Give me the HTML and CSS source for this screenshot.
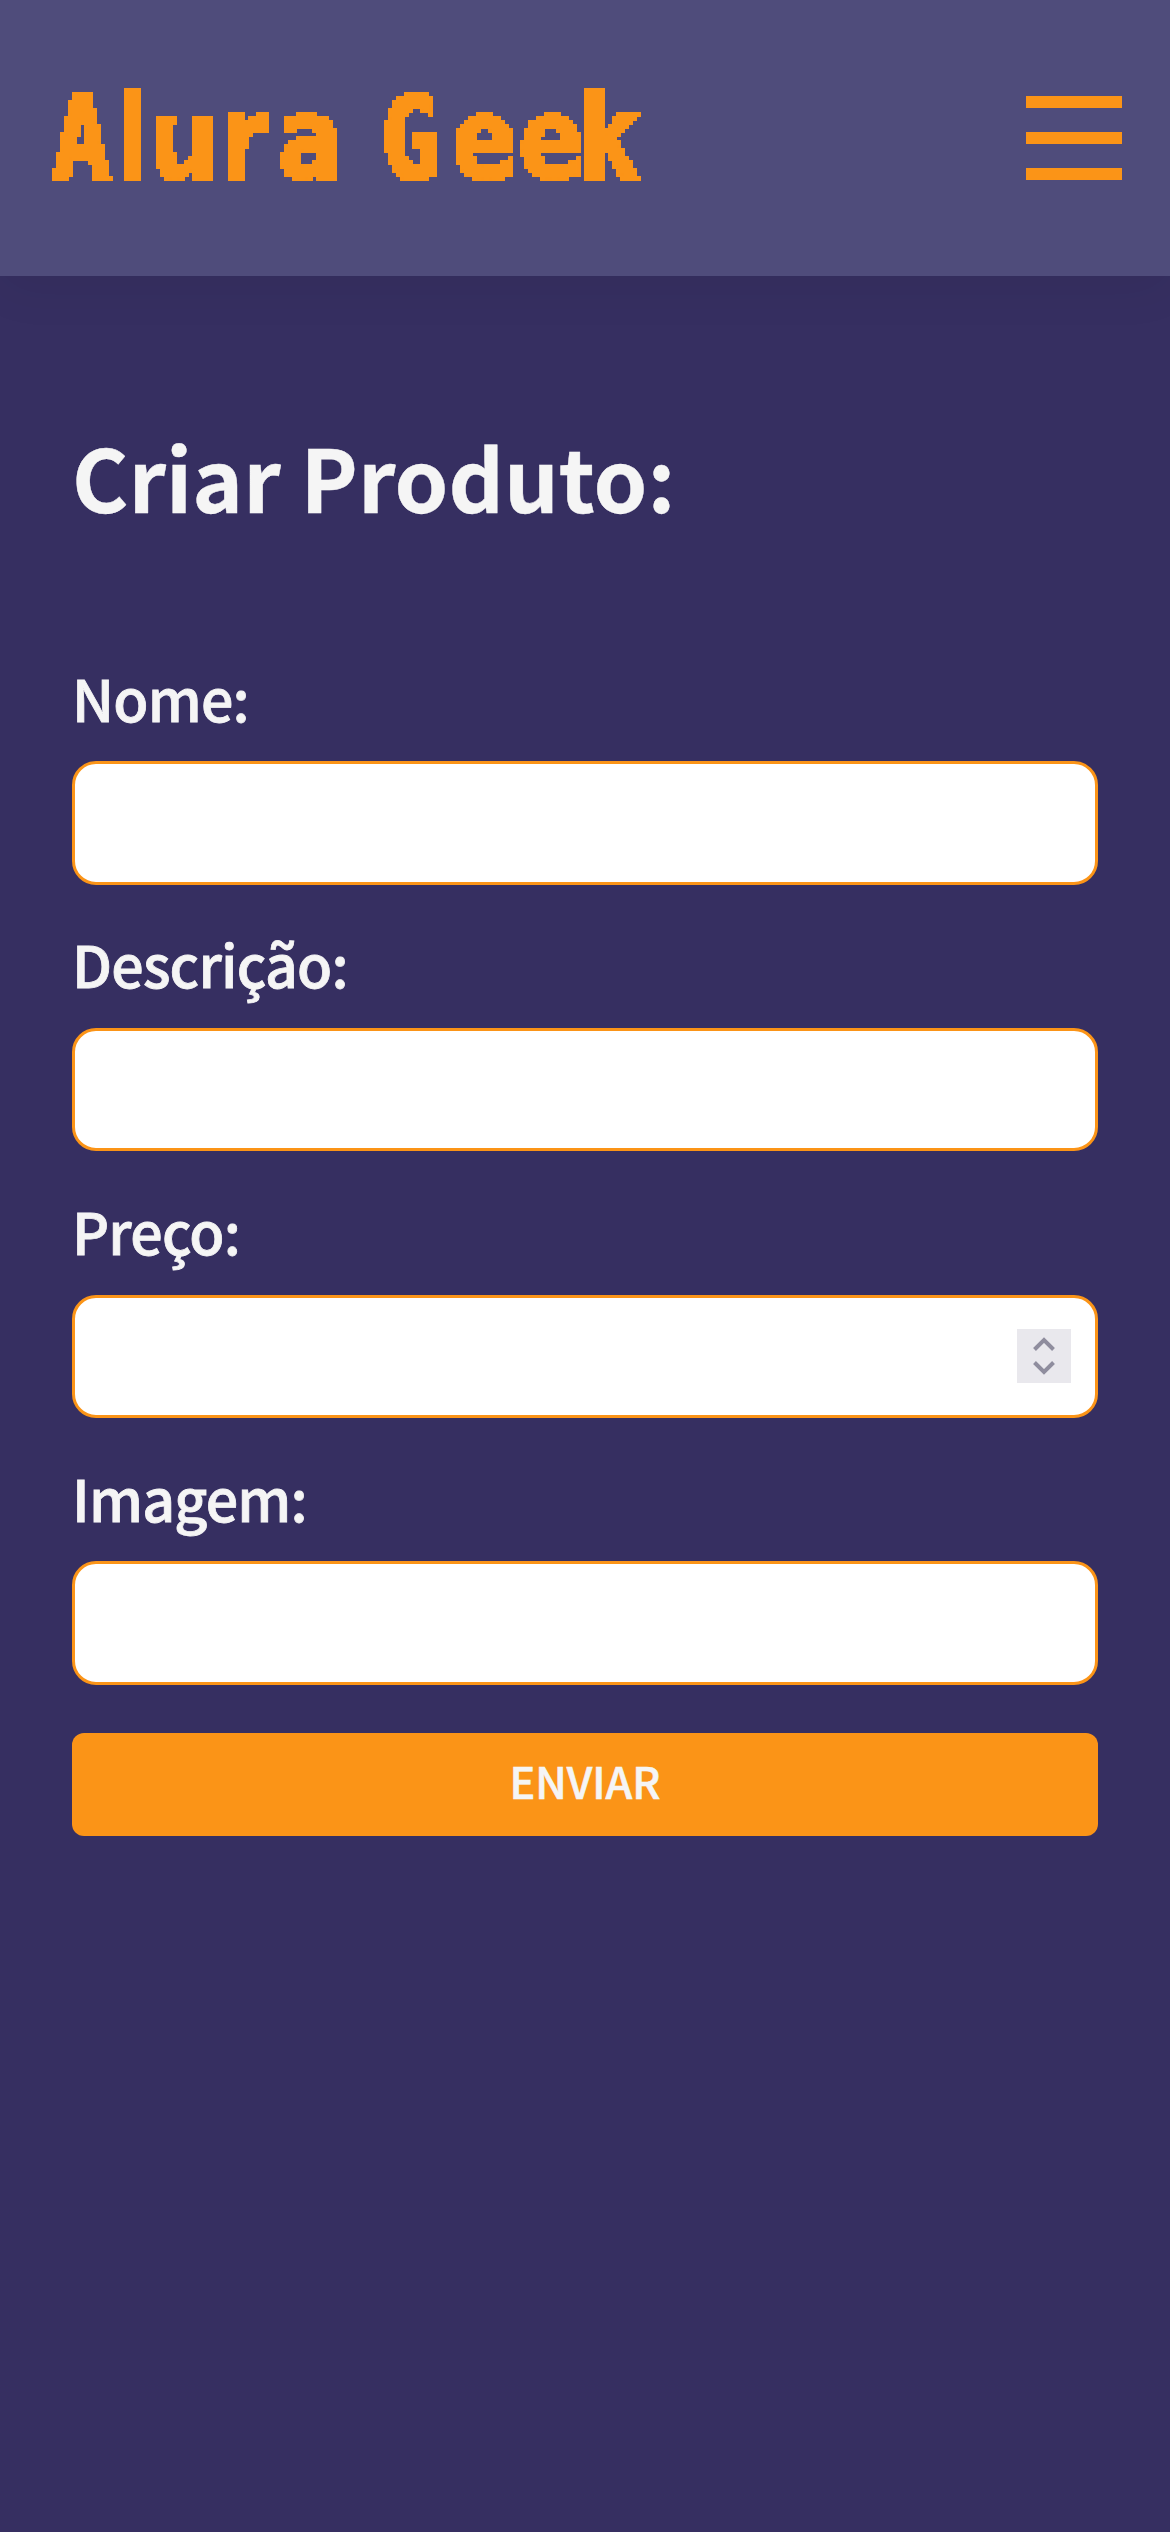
FILE: index.html
```html
<!DOCTYPE html>
<html lang="pt-BR">
<head>
  <meta charset="utf-8">
  <title>Alura Geek</title>
  <link rel="stylesheet" href="styles.css">
</head>
<body>
  <header class="header">
    <svg class="logo" width="620" height="160" viewBox="40 50 620 160" role="img" aria-label="Alura Geek">
      <defs>
        <filter id="pixel" filterUnits="userSpaceOnUse" x="40" y="80" width="620" height="110" color-interpolation-filters="sRGB">
          <feFlood x="42" y="82" width="1" height="1" flood-color="#000"/>
          <feOffset x="40" y="80" width="4" height="4" result="cell"/>
          <feTile in="cell" result="grid"/>
          <feComposite in="SourceGraphic" in2="grid" operator="in"/>
          <feComponentTransfer>
            <feFuncA type="discrete" tableValues="0 1"/>
          </feComponentTransfer>
          <feMorphology operator="dilate" radius="2"/>
        </filter>
      </defs>
      <g filter="url(#pixel)">
        <text class="logo-text" transform="scale(.86 1)" y="178"><tspan class="logo-a" x="61">A</tspan><tspan x="135">l</tspan><tspan x="173">u</tspan><tspan x="256">r</tspan><tspan x="323">a</tspan> <tspan class="logo-mono" x="443">G</tspan><tspan x="525">e</tspan><tspan x="603">e</tspan><tspan class="logo-mono" x="674">k</tspan></text>
      </g>
    </svg>
    <button class="menu" type="button" aria-label="Menu">
      <span class="menu-bar"></span>
      <span class="menu-bar"></span>
      <span class="menu-bar"></span>
    </button>
  </header>
  <main class="main">
    <h1 class="title">Criar Produto:</h1>
    <form class="form">
      <div class="field">
        <label class="label" for="nome">Nome:</label>
        <div class="box"><input class="input" id="nome" type="text"></div>
      </div>
      <div class="field">
        <label class="label" for="descricao">Descrição:</label>
        <div class="box"><input class="input" id="descricao" type="text"></div>
      </div>
      <div class="field">
        <label class="label" for="preco">Preço:</label>
        <div class="box">
          <input class="input" id="preco" type="text" inputmode="decimal">
          <svg class="spinner" width="54" height="54" viewBox="0 0 54 54">
            <path d="M17.500 20.500 27 11l9.500 9.500M17.500 33.500 27 43l9.500-9.500"/>
          </svg>
        </div>
      </div>
      <div class="field">
        <label class="label" for="imagem">Imagem:</label>
        <div class="box"><input class="input" id="imagem" type="text"></div>
      </div>
      <button class="submit" type="button">ENVIAR</button>
    </form>
  </main>
</body>
</html>
```
FILE: styles.css
```css
* { box-sizing: border-box; }

body {
  margin: 0;
  min-height: 2532px;
  background: #362f61;
  color: #f5f5f5;
  font-family: "Noto Sans CJK JP", "Noto Sans", sans-serif;
}

.header {
  display: flex;
  justify-content: space-between;
  align-items: flex-start;
  height: 276px;
  padding: 50px 48px 0 40px;
  background: #4f4c7b;
  box-shadow: 0 12px 48px rgba(0, 0, 0, .06);
}

.logo { display: block; }

.logo-text {
  fill: #fb9417;
  stroke: #fb9417;
  stroke-width: 2;
  font-family: "DejaVu Sans", sans-serif;
  font-size: 114px;
  font-weight: 700;
}

.logo-mono {
  font-family: "DejaVu Sans Mono", monospace;
  stroke-width: 4;
}

.logo-a {
  font-family: "DejaVu Sans Mono", monospace;
  font-size: 112px;
  stroke-width: 4;
}

.menu {
  display: flex;
  flex-direction: column;
  gap: 24px;
  width: 96px;
  margin-top: 46px;
  padding: 0;
  border: 0;
  background: none;
}

.menu-bar {
  height: 12px;
  background: #fb9417;
}

.main { padding: 137.500px 72px 0; }

.title {
  margin: 0 0 118px;
  font-size: 86px;
  font-weight: 700;
  line-height: 124px;
  letter-spacing: .1px;
  -webkit-text-stroke: .4px #f5f5f5;
}

.form {
  display: flex;
  flex-direction: column;
  gap: 37.800px;
}

.field {
  display: flex;
  flex-direction: column;
  gap: 22.500px;
}

.label {
  font-size: 57.300px;
  font-weight: 500;
  line-height: 83px;
  letter-spacing: -.8px;
  -webkit-text-stroke: .8px #f5f5f5;
}

.box {
  display: flex;
  align-items: center;
  height: 123.500px;
  padding: 0 24px;
  border: 3px solid #fb9417;
  border-radius: 24px;
  background: #fff;
}

.input {
  flex: 1;
  min-width: 0;
  height: 100%;
  border: 0;
  outline: 0;
  background: transparent;
  font: inherit;
  font-size: 43px;
}

.spinner {
  background: #e9e8ed;
  fill: none;
  stroke: #8f8d9e;
  stroke-width: 4;
}

.submit {
  height: 103px;
  margin-top: 10px;
  padding: 0 0 8px;
  border: 0;
  border-radius: 12px;
  background: #fb9417;
  color: #f5f5f5;
  font-family: inherit;
  font-size: 43px;
  font-weight: 500;
  -webkit-text-stroke: .6px #f5f5f5;
}
```
